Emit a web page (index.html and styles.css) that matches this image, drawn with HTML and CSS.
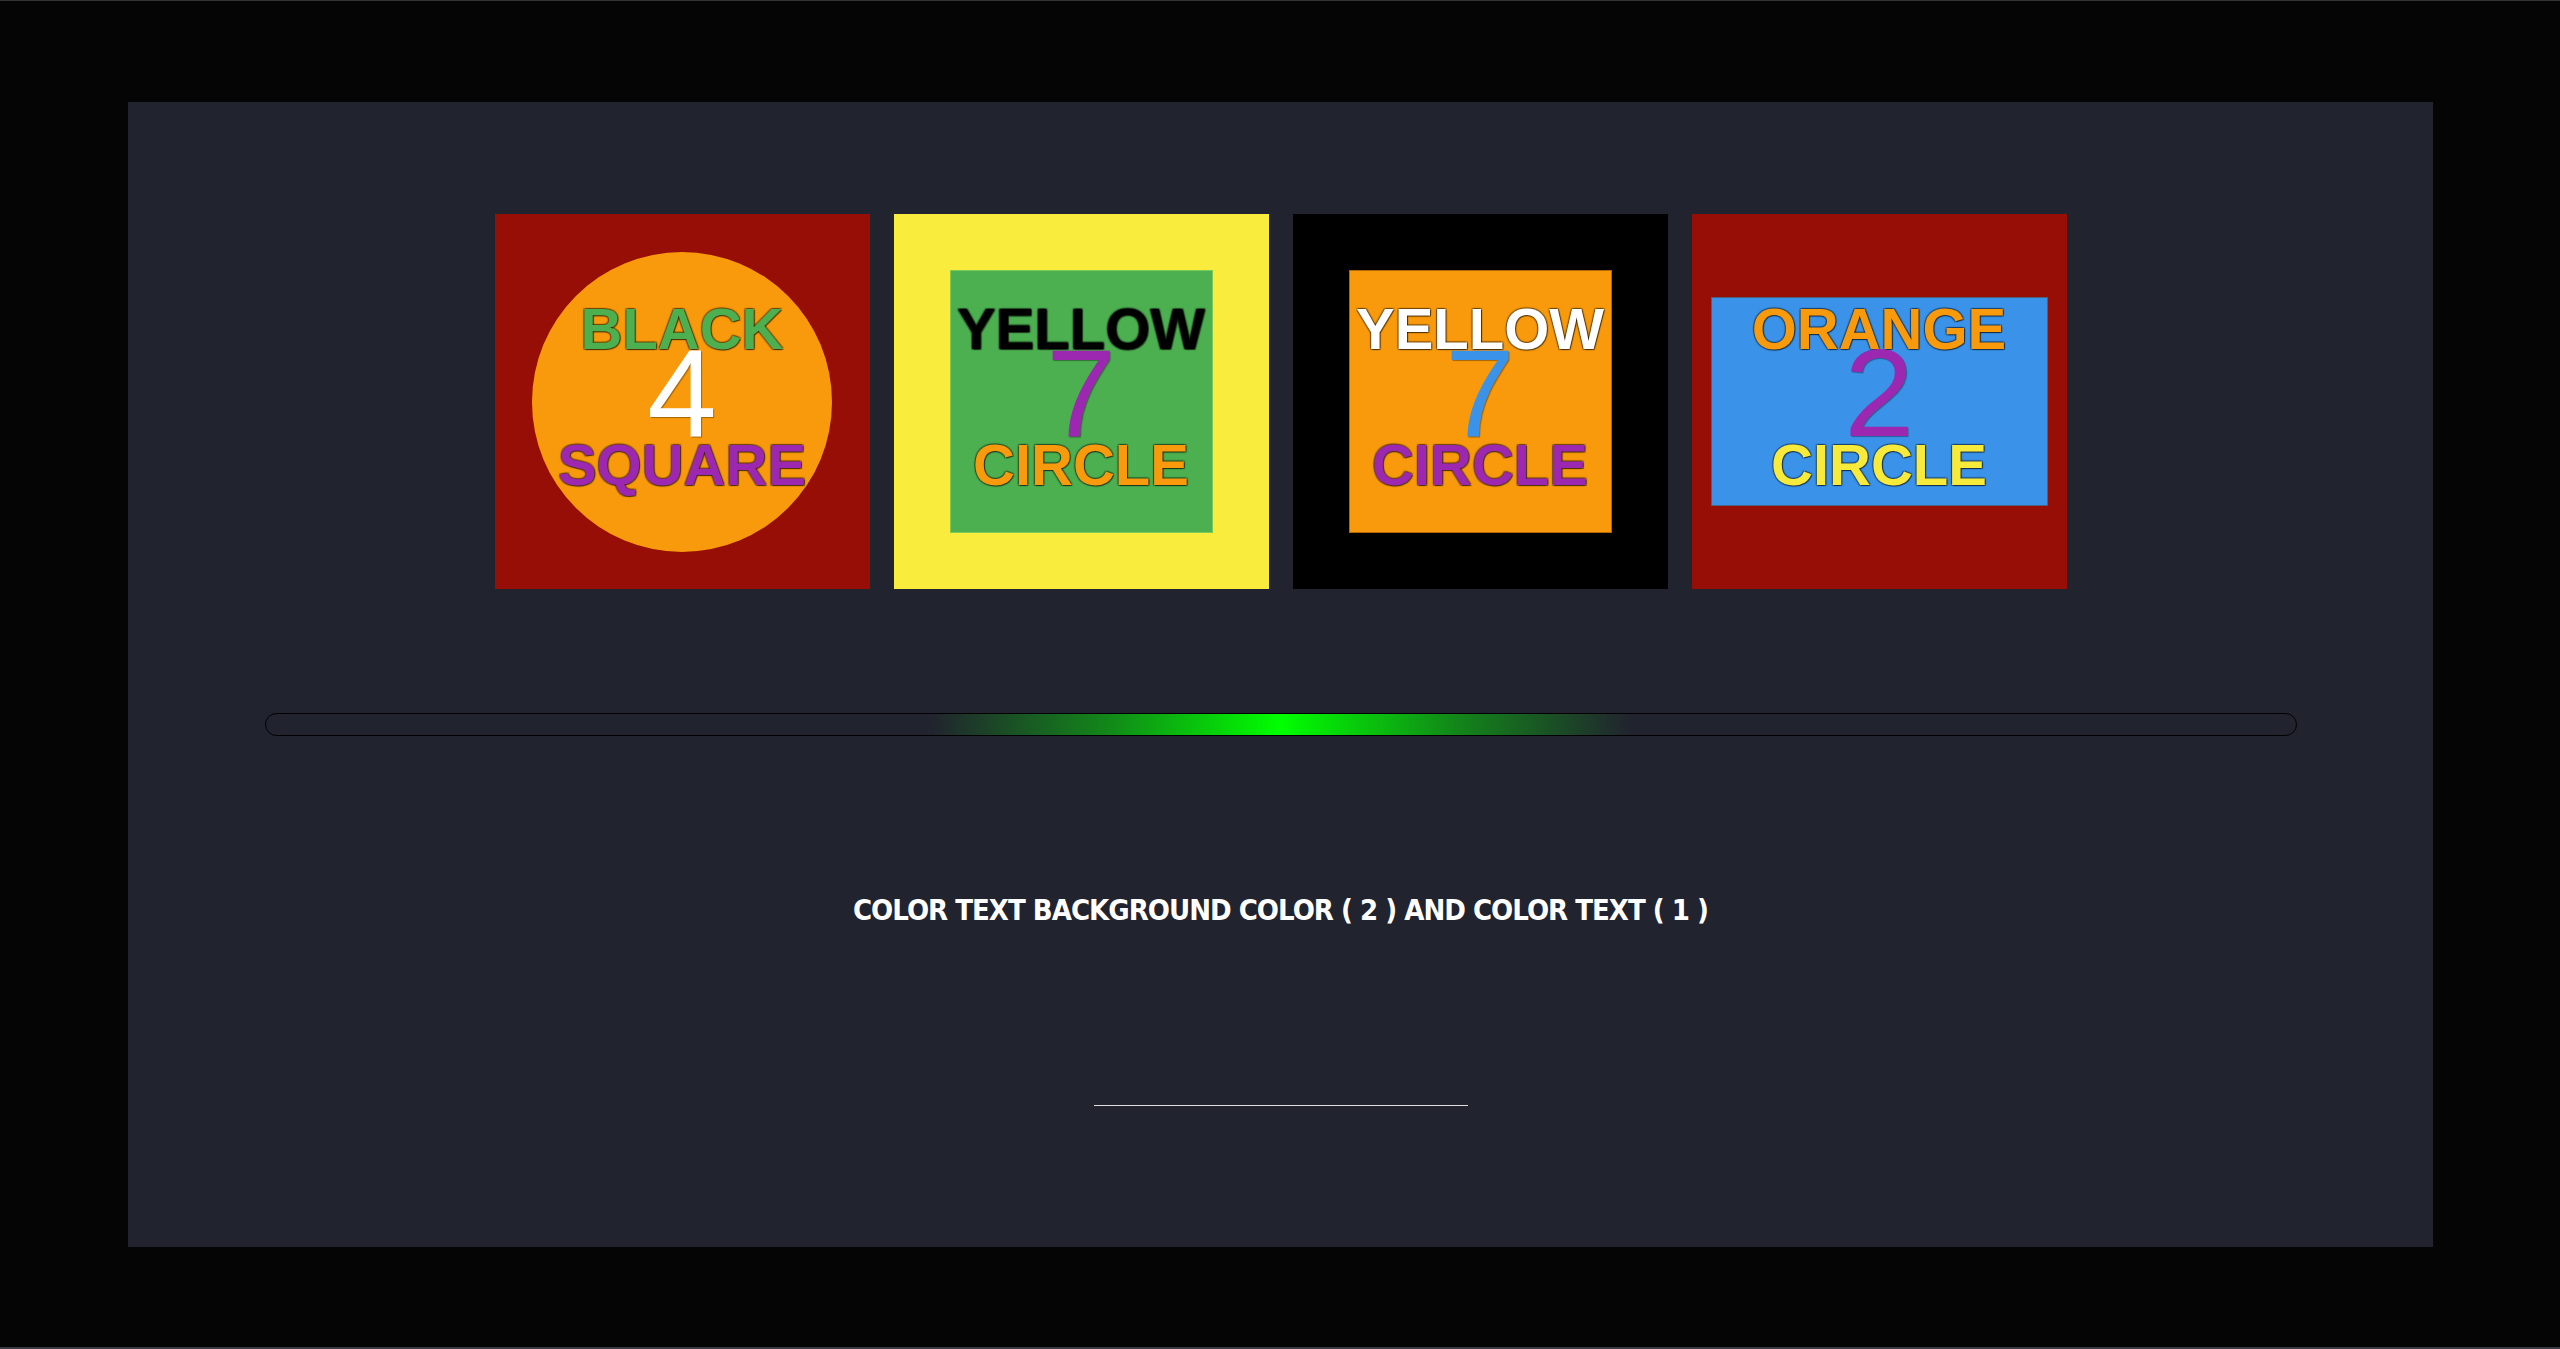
FILE: index.html
```html
<!DOCTYPE html>
<html lang="en">
<head>
<meta charset="utf-8">
<title>Color captcha</title>
<link rel="stylesheet" href="styles.css">
</head>
<body>
<div class="page">
  <main class="panel">
    <div class="cards">
      <div class="card bg-red">
        <div class="shape circle bg-orange"></div>
        <div class="stack">
          <span class="word c-green">BLACK</span>
          <span class="num c-white">4</span>
          <span class="word c-purple">SQUARE</span>
        </div>
      </div>
      <div class="card bg-yellow">
        <div class="shape square bg-green edge-light"></div>
        <div class="stack">
          <span class="word c-black">YELLOW</span>
          <span class="num c-purple">7</span>
          <span class="word c-orange">CIRCLE</span>
        </div>
      </div>
      <div class="card bg-black">
        <div class="shape square bg-orange edge-dark"></div>
        <div class="stack">
          <span class="word c-white">YELLOW</span>
          <span class="num c-blue">7</span>
          <span class="word c-purple">CIRCLE</span>
        </div>
      </div>
      <div class="card bg-red">
        <div class="shape rect bg-blue edge-dark"></div>
        <div class="stack">
          <span class="word c-orange">ORANGE</span>
          <span class="num c-purple">2</span>
          <span class="word c-yellow">CIRCLE</span>
        </div>
      </div>
    </div>
    <div class="track"><div class="glow"></div></div>
    <p class="prompt">COLOR TEXT BACKGROUND COLOR ( 2 ) AND COLOR TEXT ( 1 )</p>
    <div class="answer"></div>
  </main>
</div>
</body>
</html>
```
FILE: styles.css
```css
html, body {
  margin: 0;
  padding: 0;
}
body {
  background: #050505;
  height: 1349px;
  box-sizing: border-box;
  border-top: 1px solid #333336;
  border-bottom: 2px solid #3a3a42;
  overflow: hidden;
  font-family: "Liberation Sans", Arial, sans-serif;
}
.page {
  padding: 101px 0 0 128px;
}
.panel {
  width: 2305px;
  height: 1145px;
  background: #21232e;
  display: flex;
  flex-direction: column;
  align-items: center;
  padding-top: 112px;
  box-sizing: border-box;
}
.cards {
  display: flex;
  gap: 24px;
}
.card {
  width: 375px;
  height: 375px;
  display: grid;
}
.card > * {
  grid-area: 1 / 1;
}
.shape {
  place-self: center;
}
.circle {
  width: 300px;
  height: 300px;
  border-radius: 50%;
}
.square {
  width: 263px;
  height: 263px;
}
.rect {
  width: 337px;
  height: 209px;
}
.edge-light { box-shadow: inset 0 0 0 1px rgba(160, 220, 90, 0.6); }
.edge-dark { box-shadow: inset 0 0 0 1px rgba(90, 40, 0, 0.45); }

.stack {
  display: flex;
  flex-direction: column;
  align-items: center;
  padding-top: 86px;
  position: relative;
}
.word {
  font-weight: 700;
  font-size: 58px;
  line-height: 58px;
  text-shadow: 1px 1px 1px rgba(0,0,0,0.55), -1px -1px 1px rgba(0,0,0,0.35), 1px -1px 1px rgba(0,0,0,0.35), -1px 1px 1px rgba(0,0,0,0.35);
}
.num {
  font-size: 125px;
  line-height: 125px;
  font-weight: 400;
  margin-top: -28px;
  margin-bottom: -19px;
  text-shadow: 1px 1px 1px rgba(0,0,0,0.35);
}

.bg-red { background: #970e07; }
.bg-yellow { background: #f9ec3d; }
.bg-black { background: #000000; }
.bg-orange { background: #f99a0c; }
.bg-green { background: #4caf50; }
.bg-blue { background: #3a93e9; }

.c-green { color: #4caf50; }
.c-white { color: #ffffff; }
.c-purple { color: #9c27b0; }
.c-black { color: #000000; }
.c-orange { color: #f99a0c; }
.c-blue { color: #3a93e9; }
.c-yellow { color: #f8ea3a; }

.track {
  margin-top: 124px;
  width: 2032px;
  height: 23px;
  box-sizing: border-box;
  border: 1px solid #000;
  border-radius: 12px;
  display: flex;
  justify-content: center;
  overflow: hidden;
}
.glow {
  width: 700px;
  height: 100%;
  background: linear-gradient(90deg, rgba(0,255,0,0) 0%, rgba(0,255,0,0.45) 25%, #00ff00 50%, rgba(0,255,0,0.45) 75%, rgba(0,255,0,0) 100%);
}
.prompt {
  margin: 157px 0 0;
  color: #ffffff;
  font-family: "DejaVu Sans Condensed", "Liberation Sans Narrow", Roboto, sans-serif;
  font-weight: 700;
  font-size: 29px;
  line-height: 35px;
  letter-spacing: -1px;
  white-space: nowrap;
}
.answer {
  margin-top: 177px;
  width: 374px;
  height: 0;
  border-bottom: 1px solid #e0e0e0;
}
```
